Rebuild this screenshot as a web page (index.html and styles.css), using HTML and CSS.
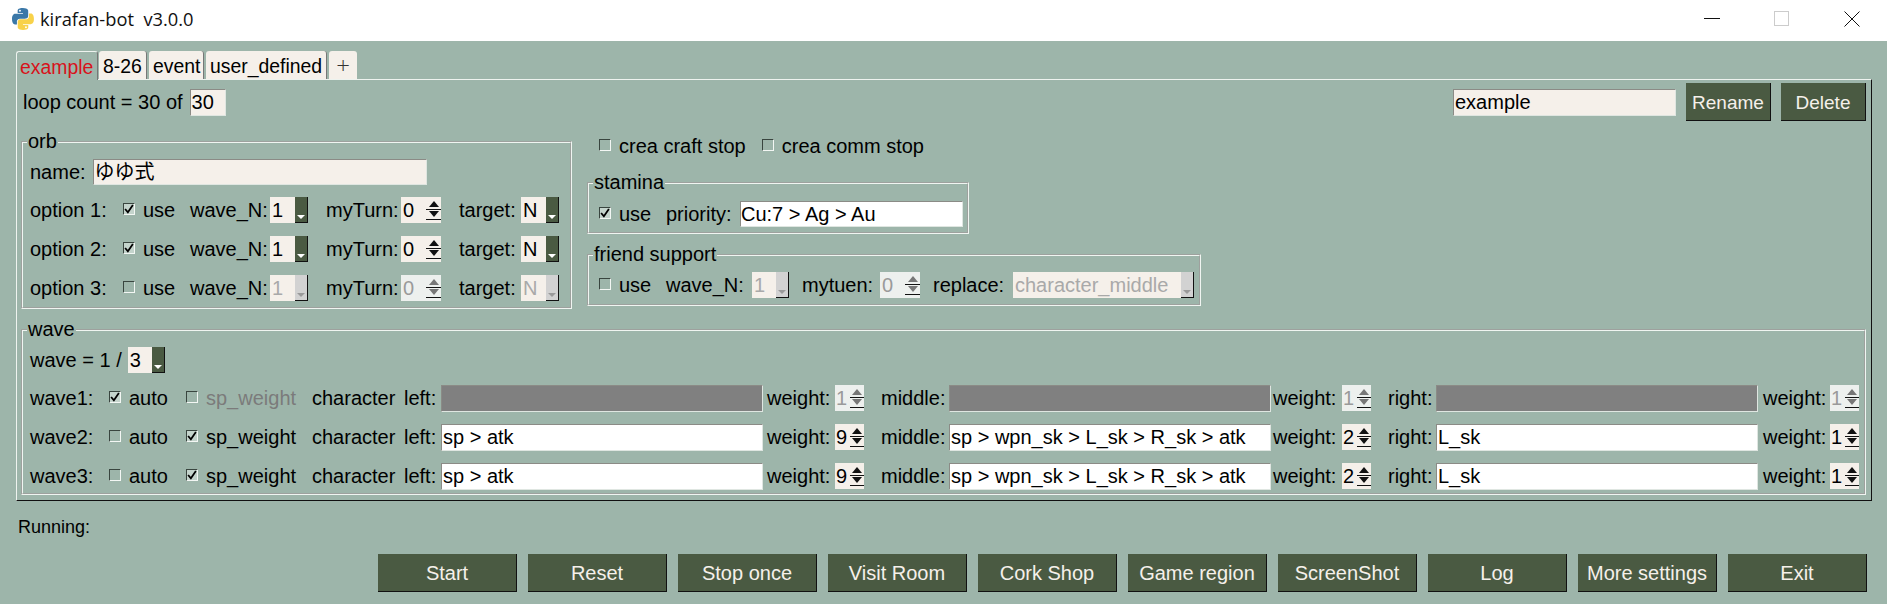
FILE: index.html
```html
<!DOCTYPE html>
<html lang="en">
    <head>
        <title>kirafan-bot v3.0.0</title>
        <meta charset="utf-8" />
        <link rel="stylesheet" href="styles.css">
    </head>
    <body>
        <svg class="defs" width="0" height="0">
            <symbol id="tick" viewBox="0 0 9 9"><path d="M1 4.5 L3.5 7.5 L8 1" fill="none" stroke="#000" stroke-width="1.6"/></symbol>
        </svg>

        <div class="titlebar">
            <svg class="logo" viewBox="0 0 111 110" width="22" height="22">
                <path fill="#3b78a8" d="M54.9 0C26.8 0 28.6 12.2 28.6 12.2v12.6h26.8v3.8H17.9S0 26.6 0 54.9c0 28.3 15.6 27.3 15.6 27.3h9.3V69s-.5-15.6 15.4-15.6h26.5s14.9.2 14.9-14.4V14.9S84 0 54.9 0zM40.2 8.5a4.8 4.8 0 1 1 0 9.6 4.8 4.8 0 0 1 0-9.6z"/>
                <path fill="#f8d24a" d="M55.7 110c28.1 0 26.3-12.2 26.3-12.2V85.2H55.2v-3.8h37.5s17.9 2 17.9-26.3c0-28.3-15.6-27.3-15.6-27.3h-9.3V41s.5 15.6-15.4 15.6H43.8S28.9 56.4 28.9 71v24.1S26.6 110 55.7 110zm14.7-8.5a4.8 4.8 0 1 1 0-9.6 4.8 4.8 0 0 1 0 9.6z"/>
            </svg>
            <span class="app-name">kirafan-bot&nbsp; v3.0.0</span>
            <div class="win-controls">
                <svg width="16" height="16"><path d="M0 7.5H16" stroke="#111"/></svg>
                <svg width="16" height="16"><rect x="0.5" y="0.5" width="14" height="14" fill="none" stroke="#ccc"/></svg>
                <svg width="16" height="16"><path d="M0.5 0.5 L15.5 15.5 M15.5 0.5 L0.5 15.5" stroke="#111" fill="none"/></svg>
            </div>
        </div>

        <div class="tabs">
            <div class="tab selected">example</div>
            <div class="tab tab-8-26">8-26</div>
            <div class="tab tab-event">event</div>
            <div class="tab tab-user">user_defined</div>
            <div class="tab add">+</div>
        </div>

        <div class="notebook">
            <div class="top-row">
                <span>loop count = 30 of</span>
                <div class="entry loop-entry">30</div>
                <div class="entry tab-name">example</div>
                <div class="btn small">Rename</div>
                <div class="btn small">Delete</div>
            </div>

            <div class="mid-row">
                <fieldset class="orb">
                    <legend>orb</legend>
                    <div class="name-row">
                        <span>name:</span>
                        <div class="entry name-entry">ゆゆ式</div>
                    </div>
                    <div class="orb-grid">
                        <span>option 1:</span>
                        <label class="check"><span class="box on"><svg><use href="#tick"/></svg></span>use</label>
                        <span>wave_N:</span>
                        <div class="combo"><span class="val">1</span><span class="drop"></span></div>
                        <span>myTurn:</span>
                        <div class="spin"><span class="val">0</span><span class="arrows"><i class="up"></i><i class="down"></i></span></div>
                        <span>target:</span>
                        <div class="combo"><span class="val">N</span><span class="drop"></span></div>

                        <span>option 2:</span>
                        <label class="check"><span class="box on"><svg><use href="#tick"/></svg></span>use</label>
                        <span>wave_N:</span>
                        <div class="combo"><span class="val">1</span><span class="drop"></span></div>
                        <span>myTurn:</span>
                        <div class="spin"><span class="val">0</span><span class="arrows"><i class="up"></i><i class="down"></i></span></div>
                        <span>target:</span>
                        <div class="combo"><span class="val">N</span><span class="drop"></span></div>

                        <span>option 3:</span>
                        <label class="check"><span class="box"></span>use</label>
                        <span>wave_N:</span>
                        <div class="combo off"><span class="val">1</span><span class="drop"></span></div>
                        <span>myTurn:</span>
                        <div class="spin off"><span class="val">0</span><span class="arrows"><i class="up"></i><i class="down"></i></span></div>
                        <span>target:</span>
                        <div class="combo off"><span class="val">N</span><span class="drop"></span></div>
                    </div>
                </fieldset>

                <div class="side">
                    <div class="crea-row">
                        <label class="check"><span class="box"></span>crea craft stop</label>
                        <label class="check"><span class="box"></span>crea comm stop</label>
                    </div>
                    <fieldset class="stamina">
                        <legend>stamina</legend>
                        <div class="stamina-grid">
                            <label class="check"><span class="box on"><svg><use href="#tick"/></svg></span>use</label>
                            <span>priority:</span>
                            <div class="entry white">Cu:7 &gt; Ag &gt; Au</div>
                        </div>
                    </fieldset>
                    <fieldset class="friend">
                        <legend>friend support</legend>
                        <div class="friend-grid">
                            <label class="check"><span class="box"></span>use</label>
                            <span>wave_N:</span>
                            <div class="combo off"><span class="val">1</span><span class="drop"></span></div>
                            <span>mytuen:</span>
                            <div class="spin off"><span class="val">0</span><span class="arrows"><i class="up"></i><i class="down"></i></span></div>
                            <span>replace:</span>
                            <div class="combo off wide"><span class="val">character_middle</span><span class="drop"></span></div>
                        </div>
                    </fieldset>
                </div>
            </div>

            <fieldset class="wave">
                <legend>wave</legend>
                <div class="wave-count">
                    <span>wave = 1 /</span>
                    <div class="combo"><span class="val">3</span><span class="drop"></span></div>
                </div>
                <div class="wave-grid">
                    <span>wave1:</span>
                    <label class="check"><span class="box on"><svg><use href="#tick"/></svg></span>auto</label>
                    <label class="check grey"><span class="box"></span>sp_weight</label>
                    <span>character</span>
                    <span>left:</span>
                    <div class="entry blank"></div>
                    <span>weight:</span>
                    <div class="spin thin off"><span class="val">1</span><span class="arrows"><i class="up"></i><i class="down"></i></span></div>
                    <span>middle:</span>
                    <div class="entry blank"></div>
                    <span>weight:</span>
                    <div class="spin thin off"><span class="val">1</span><span class="arrows"><i class="up"></i><i class="down"></i></span></div>
                    <span>right:</span>
                    <div class="entry blank"></div>
                    <span>weight:</span>
                    <div class="spin thin off"><span class="val">1</span><span class="arrows"><i class="up"></i><i class="down"></i></span></div>

                    <span>wave2:</span>
                    <label class="check"><span class="box"></span>auto</label>
                    <label class="check"><span class="box on"><svg><use href="#tick"/></svg></span>sp_weight</label>
                    <span>character</span>
                    <span>left:</span>
                    <div class="entry white">sp &gt; atk</div>
                    <span>weight:</span>
                    <div class="spin thin"><span class="val">9</span><span class="arrows"><i class="up"></i><i class="down"></i></span></div>
                    <span>middle:</span>
                    <div class="entry white">sp &gt; wpn_sk &gt; L_sk &gt; R_sk &gt; atk</div>
                    <span>weight:</span>
                    <div class="spin thin"><span class="val">2</span><span class="arrows"><i class="up"></i><i class="down"></i></span></div>
                    <span>right:</span>
                    <div class="entry white">L_sk</div>
                    <span>weight:</span>
                    <div class="spin thin"><span class="val">1</span><span class="arrows"><i class="up"></i><i class="down"></i></span></div>

                    <span>wave3:</span>
                    <label class="check"><span class="box"></span>auto</label>
                    <label class="check"><span class="box on"><svg><use href="#tick"/></svg></span>sp_weight</label>
                    <span>character</span>
                    <span>left:</span>
                    <div class="entry white">sp &gt; atk</div>
                    <span>weight:</span>
                    <div class="spin thin"><span class="val">9</span><span class="arrows"><i class="up"></i><i class="down"></i></span></div>
                    <span>middle:</span>
                    <div class="entry white">sp &gt; wpn_sk &gt; L_sk &gt; R_sk &gt; atk</div>
                    <span>weight:</span>
                    <div class="spin thin"><span class="val">2</span><span class="arrows"><i class="up"></i><i class="down"></i></span></div>
                    <span>right:</span>
                    <div class="entry white">L_sk</div>
                    <span>weight:</span>
                    <div class="spin thin"><span class="val">1</span><span class="arrows"><i class="up"></i><i class="down"></i></span></div>
                </div>
            </fieldset>
        </div>

        <div class="status">Running:</div>

        <div class="actions">
            <div class="btn">Start</div>
            <div class="btn">Reset</div>
            <div class="btn">Stop once</div>
            <div class="btn">Visit Room</div>
            <div class="btn">Cork Shop</div>
            <div class="btn">Game region</div>
            <div class="btn">ScreenShot</div>
            <div class="btn">Log</div>
            <div class="btn">More settings</div>
            <div class="btn">Exit</div>
        </div>
    </body>
</html>
```

FILE: styles.css
```css
html, body { height: 100%; }
body {
    margin: 0;
    overflow: hidden;
    background-color: #9db5aa;
    color: #000;
    font-family: "Liberation Sans", Arial, "Noto Sans CJK JP", sans-serif;
    font-size: 20px;
    line-height: 23px;
}
.defs { position: absolute; }

/* window title */
.titlebar {
    display: flex;
    align-items: center;
    height: 41px;
    padding-left: 12px;
    padding-right: 27px;
    background-color: #fff;
    box-sizing: border-box;
}
.logo { margin-top: -4px; }
.app-name {
    margin-left: 6px;
    margin-top: -4px;
    font-family: "Open Sans", sans-serif;
    font-size: 18.3px;
    color: #111;
}
.win-controls {
    display: flex;
    gap: 54px;
    margin-left: auto;
    margin-top: -4px;
}

/* tabs */
.tabs {
    display: flex;
    align-items: flex-start;
    gap: 2px;
    height: 28px;
    margin: 10px 0 0 16px;
}
.tab {
    position: relative;
    height: 28px;
    padding-left: 4px;
    font-size: 19.4px;
    line-height: 31px;
    background-color: #f5f0ea;
    border-right: 1px solid #777;
    border-radius: 3px 3px 0 0;
    box-sizing: border-box;
}
.tab.selected {
    width: 82px;
    height: 29px;
    padding-left: 3px;
    color: #d8121a;
    background-color: #9db5aa;
    border-top: 1px solid #eef3ef;
    border-left: 1px solid #eef3ef;
    line-height: 30px;
    z-index: 1;
    margin-right: -1px;
}
.tab-8-26 { width: 48px; }
.tab-event { width: 55px; }
.tab-user { width: 121px; }
.tab.add {
    width: 28px;
    padding: 0;
    text-align: center;
    font-family: "Open Sans", sans-serif;
    font-weight: 300;
    font-size: 24px;
    line-height: 27px;
    color: #333;
    border-right: 0;
}

/* main frame */
.notebook {
    width: 1856px;
    margin-left: 16px;
    padding: 3px 5px 5px 4px;
    border: 1px solid #eef3ef;
    border-right-color: #111;
    border-bottom-color: #111;
    box-sizing: border-box;
}
.top-row {
    display: flex;
    align-items: center;
    height: 38px;
    padding-left: 2px;
}
.loop-entry { width: 36px; margin-left: 7px; }
.tab-name { width: 223px; margin-left: auto; }
.mid-row {
    display: flex;
    margin-top: 9px;
}

fieldset {
    margin: 0;
    padding: 0;
    min-width: 0;
    border: 2px groove #f0f5f1;
    box-sizing: border-box;
}
legend {
    padding: 0 1px;
    height: 23px;
}

/* widgets */
.entry {
    display: flex;
    align-items: center;
    height: 27px;
    padding-left: 1px;
    background-color: #f5f0ea;
    border: 1px solid;
    border-color: #8b8b86 #dfe6e1 #dfe6e1 #8b8b86;
    box-sizing: border-box;
    white-space: nowrap;
}
.entry.white { background-color: #fff; }
.entry.blank { background-color: #808080; }

.check {
    display: flex;
    align-items: center;
    gap: 8px;
}
.check.grey { color: #7b7b7b; }
.box {
    display: block;
    flex: none;
    width: 12px;
    height: 12px;
    margin-top: -3px;
    border: 1px solid;
    border-color: #39453f #f3f7f4 #f3f7f4 #39453f;
    box-sizing: border-box;
}
.box.on { background-color: #c4d4cc; }
.box svg { display: block; width: 10px; height: 10px; }

.combo, .spin {
    display: flex;
    height: 26px;
    background-color: #f5f0ea;
    box-sizing: border-box;
}
.val {
    flex: 1;
    padding-left: 2px;
    line-height: 26px;
    white-space: nowrap;
    overflow: hidden;
}
.drop {
    position: relative;
    flex: none;
    width: 13px;
    background-color: #4a5a42;
    border-right: 1px solid #111;
    border-bottom: 1px solid #111;
    box-sizing: border-box;
}
.drop::after {
    content: "";
    position: absolute;
    left: 2px;
    bottom: 3px;
    border-left: 4px solid transparent;
    border-right: 4px solid transparent;
    border-top: 4px solid #fff;
}
.combo.off .val { color: #a9a9a9; }
.combo.off .drop { background-color: #d2d2d2; }
.combo.off .drop::after { border-top-color: #9a9a9a; }

.spin.off { background-color: #edf0ee; }
.spin.off .val { color: #9a9a9a; }
.arrows {
    display: flex;
    flex: none;
    flex-direction: column;
    width: 15px;
    margin: 2px 0 3px;
}
.arrows i {
    display: flex;
    flex: 1;
    align-items: center;
    justify-content: center;
    border-bottom: 1px solid #111;
}
.arrows i::before {
    content: "";
    border-left: 5px solid transparent;
    border-right: 5px solid transparent;
}
.arrows .up::before { border-bottom: 6px solid #111; }
.arrows .down::before { border-top: 6px solid #111; }
.spin.off .arrows .up::before { border-bottom-color: #777; }
.spin.off .arrows .down::before { border-top-color: #777; }
.spin.thin .arrows { width: 14px; }
.spin.thin .val { padding-left: 1px; }

/* orb */
.orb {
    flex: none;
    width: 551px;
    padding: 6px 7px 6px 7px;
}
.orb legend, .wave legend { margin-left: -3px; }
.name-row {
    display: flex;
    align-items: center;
    gap: 7px;
    margin-bottom: 12px;
}
.name-entry { width: 334px; height: 26px; padding-left: 1px; }
.orb-grid {
    display: grid;
    grid-template-columns: 93px 67px 80px 38px 18px 75px 58px 62px 38px;
    grid-auto-rows: 26px;
    row-gap: 13px;
    align-items: center;
}
.orb-grid > :nth-child(8n+4) { grid-column: 4 / span 2; width: 38px; }
.orb-grid > :nth-child(8n+5) { grid-column: 6; }
.orb-grid > :nth-child(8n+6) { width: 40px; grid-column: 7; }
.orb-grid > :nth-child(8n+7) { grid-column: 8; }
.orb-grid > :nth-child(8n) { grid-column: 9; width: 38px; }

/* right of orb */
.side {
    display: flex;
    flex-direction: column;
    align-items: flex-start;
    margin-left: 15px;
}
.side legend { margin-left: -6px; }
.crea-row {
    display: flex;
    gap: 0;
    height: 32px;
    margin-bottom: 9px;
    padding-left: 12px;
}
.crea-row .check { margin-right: 16px; }
.stamina {
    width: 382px;
    padding: 7px 4px 5px 10px;
    margin-bottom: 9px;
}
.stamina-grid {
    display: grid;
    grid-template-columns: 67px 74px 223px;
    height: 26px;
    align-items: center;
}
.stamina-grid .entry { height: 26px; padding-left: 0; }
.friend {
    width: 614px;
    padding: 6px 5px 6px 10px;
}
.friend-grid {
    display: grid;
    grid-template-columns: 67px 86px 37px 13px 78px 40px 13px 80px 181px;
    height: 26px;
    align-items: center;
}
.friend-grid .combo:nth-child(3) { grid-column: 3 / span 2; width: 37px; }
.friend-grid > :nth-child(4) { grid-column: 5; }
.friend-grid .spin { grid-column: 6; }
.friend-grid > :nth-child(6) { grid-column: 8; }
.friend-grid .wide { grid-column: 9; }

/* wave */
.wave {
    width: 1845px;
    margin-top: 9px;
    padding: 6px 0 4px 7px;
}
.wave-count {
    display: flex;
    align-items: center;
    height: 26px;
    margin-bottom: 12px;
}
.wave-count .combo { width: 37px; margin-left: 6px; }
.wave-grid {
    display: grid;
    grid-template-columns: 79px 77px 126px 92px 37px 326px 68px 46px 68px 324px 69px 46px 48px 327px 67px 29px;
    grid-auto-rows: 26px;
    row-gap: 13px;
    align-items: center;
}
.wave-grid .entry { width: 322px; height: 27px; }
.wave-grid .spin { width: 29px; }

/* bottom of window */
.status {
    height: 23px;
    margin: 15px 0 15px 18px;
    font-size: 18px;
}
.btn {
    display: flex;
    align-items: center;
    justify-content: center;
    width: 139px;
    height: 38px;
    padding-top: 1px;
    color: #f5f0ea;
    background-color: #4a5a42;
    border-right: 1px solid #111;
    border-bottom: 1px solid #111;
    box-sizing: border-box;
}
.btn.small { width: 85px; margin-left: 10px; font-size: 19px; }
.actions {
    display: flex;
    justify-content: flex-end;
    gap: 11px;
    padding-right: 20px;
}
```
